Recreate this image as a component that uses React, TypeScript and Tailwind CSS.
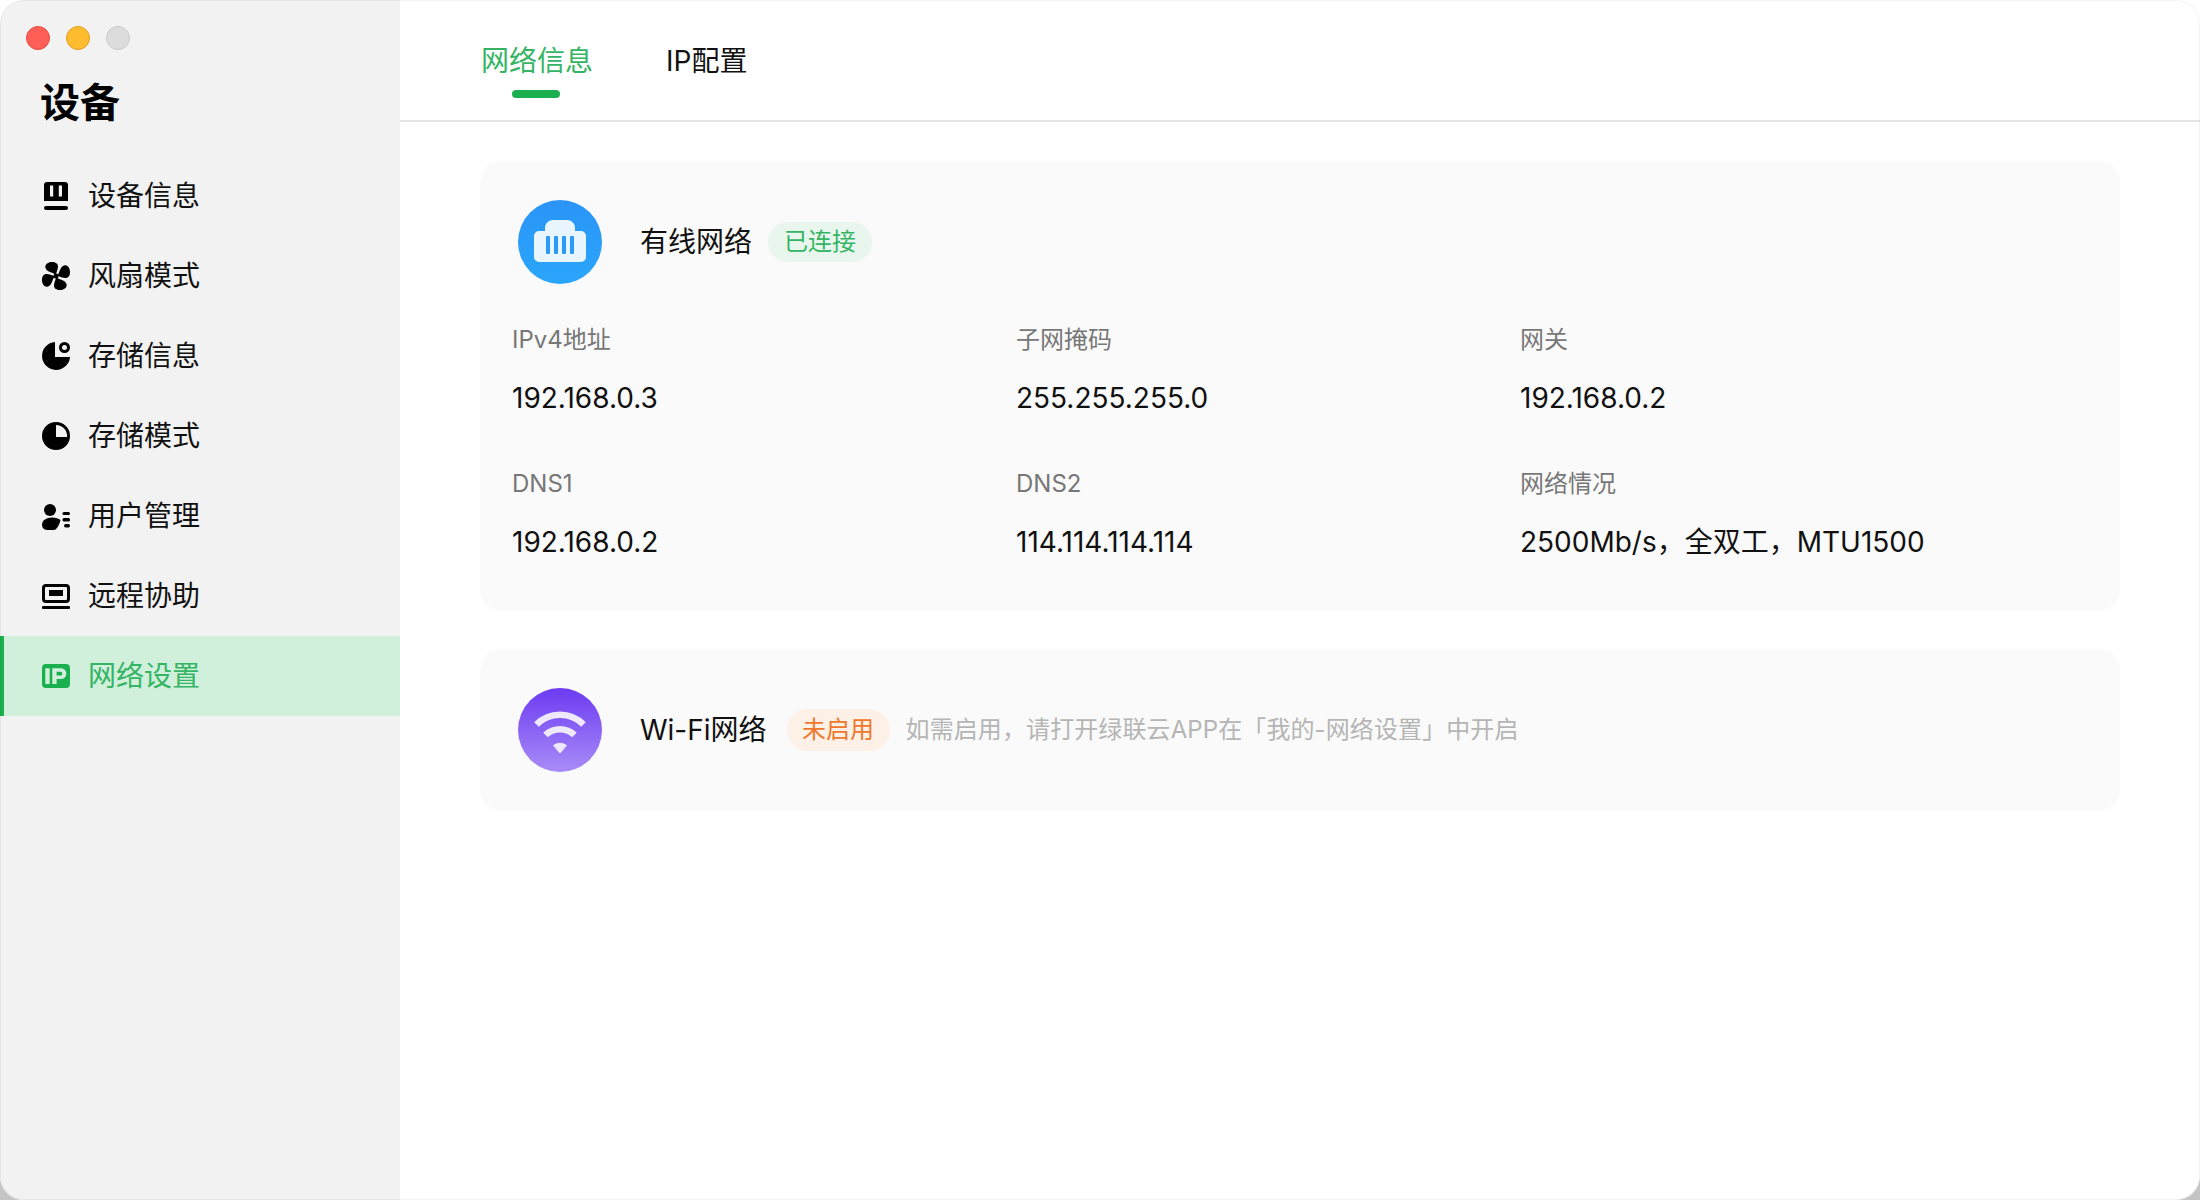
import type { ReactNode } from "react";

const FONT = "font-['Inter','Noto_Sans_CJK_SC','Noto_Sans',sans-serif]";

function DeviceIcon() {
  return (
    <svg viewBox="0 0 28 28" className="h-7 w-7" fill="currentColor">
      <path fillRule="evenodd" d="M5 0h18a3 3 0 0 1 3 3v16H2V3a3 3 0 0 1 3-3Zm3 3.500v11h3.200v-11H8Zm8.800 0v11H20v-11h-3.200Z" />
      <rect x="2" y="24" width="24" height="4" rx="2" />
    </svg>
  );
}

function FanIcon() {
  const blade = "M14 13C12 10.500 5 10.500 3.500 6 2.500 2.500 6 0 10 0c3.500 0 6 1.500 6 4.500 0 3-1.500 5-2 8.500Z";
  return (
    <svg viewBox="0 0 28 28" className="h-7 w-7" fill="currentColor">
      <path d={blade} />
      <path d={blade} transform="rotate(90 14 14)" />
      <path d={blade} transform="rotate(180 14 14)" />
      <path d={blade} transform="rotate(270 14 14)" />
      <circle cx="14" cy="14" r="2.500" />
    </svg>
  );
}

function StorageInfoIcon() {
  return (
    <svg viewBox="0 0 28 28" className="h-7 w-7" fill="currentColor">
      <path d="M13 0V15H28A14 14 0 1 1 13 0Z" />
      <path fillRule="evenodd" d="M22.500 0a5.500 5.500 0 1 1 0 11 5.500 5.500 0 0 1 0-11Zm0 3a2.500 2.500 0 1 0 0 5 2.500 2.500 0 0 0 0-5Z" />
    </svg>
  );
}

function StorageModeIcon() {
  return (
    <svg viewBox="0 0 28 28" className="h-7 w-7" fill="currentColor">
      <path fillRule="evenodd" d="M14 0a14 14 0 1 1 0 28 14 14 0 0 1 0-28Zm0 3v12h11a11 11 0 0 0-11-12Z" />
    </svg>
  );
}

function UserIcon() {
  return (
    <svg viewBox="0 0 28 28" className="h-7 w-7" fill="currentColor">
      <circle cx="8" cy="8" r="6" />
      <path d="M0 22.800C0 18.500 4.500 15.500 10 15.500c3.500 0 6.500 1 8.500 2.500-1 4-2.500 7.500-5 9.500-1 .5-2.500.5-3.500.5H5c-3 0-5-2.200-5-5.200Z" />
      <rect x="20.500" y="10" width="7.500" height="3" rx="1.500" />
      <rect x="20.500" y="16" width="7.500" height="3.500" rx="1.500" />
      <rect x="22" y="22" width="6" height="3.500" rx="1.700" />
    </svg>
  );
}

function RemoteIcon() {
  return (
    <svg viewBox="0 0 28 28" className="h-7 w-7" fill="currentColor">
      <path fillRule="evenodd" d="M4 2h20a4 4 0 0 1 4 4v11a4 4 0 0 1-4 4H4a4 4 0 0 1-4-4V6a4 4 0 0 1 4-4Zm0 3a1 1 0 0 0-1 1v11a1 1 0 0 0 1 1h20a1 1 0 0 0 1-1V6a1 1 0 0 0-1-1H4Zm3 3h14v6H7V8Z" />
      <rect x="0" y="24" width="28" height="3" rx="1" />
    </svg>
  );
}

function IpIcon() {
  return (
    <svg viewBox="0 0 28 24" className="h-6 w-7" fill="currentColor">
      <path fillRule="evenodd" d="M4 0h20a4 4 0 0 1 4 4v16a4 4 0 0 1-4 4H4a4 4 0 0 1-4-4V4a4 4 0 0 1 4-4Zm-.700 4.300V20h4.400V4.300H3.300Zm7 0V20h4.300v-5H19a5.350 5.350 0 0 0 0-10.700h-8.700Zm4.300 3.500H18.500a1.850 1.850 0 0 1 0 3.700h-3.900V7.800Z" />
    </svg>
  );
}

function LanIcon() {
  return (
    <svg viewBox="0 0 84 84" className="h-[84px] w-[84px]">
      <defs>
        <linearGradient id="lan" x1="0" y1="0" x2="0" y2="1">
          <stop offset="0" stopColor="#2a94f7" />
          <stop offset="1" stopColor="#2aa6fb" />
        </linearGradient>
      </defs>
      <circle cx="42" cy="42" r="42" fill="url(#lan)" />
      <path
        d="M35 20h14a8 8 0 0 1 8 8v3h6a5 5 0 0 1 5 5v21a5 5 0 0 1-5 5H21a5 5 0 0 1-5-5V36a5 5 0 0 1 5-5h6v-3a8 8 0 0 1 8-8Z"
        fill="#e9f5fe"
      />
      <rect x="28" y="36" width="4" height="18" rx="1" fill="#2a9af8" />
      <rect x="36" y="36" width="4" height="18" rx="1" fill="#2a9af8" />
      <rect x="44" y="36" width="4" height="18" rx="1" fill="#2a9af8" />
      <rect x="52" y="36" width="4" height="18" rx="1" fill="#2a9af8" />
    </svg>
  );
}

function WifiIcon() {
  return (
    <svg viewBox="0 0 84 84" className="h-[84px] w-[84px]">
      <defs>
        <linearGradient id="wifi" x1="0" y1="0" x2="0" y2="1">
          <stop offset="0" stopColor="#6c3bf2" />
          <stop offset="1" stopColor="#a98cf8" />
        </linearGradient>
      </defs>
      <circle cx="42" cy="42" r="42" fill="url(#wifi)" />
      <g fill="none" stroke="#efe9fe" strokeWidth="6.500">
        <path d="M18.500 36.500a33 33 0 0 1 47 0" />
        <path d="M27.500 47a21 21 0 0 1 29 0" />
      </g>
      <path d="M35.500 57.500q6.500-4.500 13 0L42 65Z" fill="#efe9fe" stroke="#efe9fe" strokeWidth="1" strokeLinejoin="round" />
    </svg>
  );
}

const menu: { label: string; icon: ReactNode; active?: boolean }[] = [
  { label: "设备信息", icon: <DeviceIcon /> },
  { label: "风扇模式", icon: <FanIcon /> },
  { label: "存储信息", icon: <StorageInfoIcon /> },
  { label: "存储模式", icon: <StorageModeIcon /> },
  { label: "用户管理", icon: <UserIcon /> },
  { label: "远程协助", icon: <RemoteIcon /> },
  { label: "网络设置", icon: <IpIcon />, active: true },
];

const fields = [
  { label: "IPv4地址", value: "192.168.0.3" },
  { label: "子网掩码", value: "255.255.255.0" },
  { label: "网关", value: "192.168.0.2" },
  { label: "DNS1", value: "192.168.0.2" },
  { label: "DNS2", value: "114.114.114.114" },
  { label: "网络情况", value: "2500Mb/s，全双工，MTU1500" },
];

export default function App() {
  return (
    <div className={`h-[1200px] w-[2200px] overflow-hidden bg-linear-to-b from-white via-[#e4e4e4] to-[#c4c4c4] ${FONT}`}>
      <div className="relative flex h-full overflow-hidden rounded-[24px] bg-white after:pointer-events-none after:absolute after:inset-0 after:rounded-[24px] after:border after:border-black/5">
        <aside className="flex w-[400px] shrink-0 flex-col bg-[#f2f2f2]">
          <div className="flex gap-4 pl-[26px] pt-[26px]">
            <span className="h-6 w-6 rounded-full border border-[#e5483f] bg-[#ff5f57]" />
            <span className="h-6 w-6 rounded-full border border-[#dfa023] bg-[#febc2e]" />
            <span className="h-6 w-6 rounded-full border border-[#cacaca] bg-[#dcdcdc]" />
          </div>
          <h1 className="ml-10 mt-[23px] text-[40px] font-bold leading-[60px] text-black">设备</h1>
          <nav className="mt-[23px] flex flex-col">
            {menu.map((item) => (
              <div
                key={item.label}
                className={`flex h-20 items-center gap-[18px] border-l-4 pl-[38px] text-[28px] ${
                  item.active
                    ? "border-[#1bb04f] bg-[#d0f0dc] text-[#35b564]"
                    : "border-transparent text-[#111111]"
                }`}
              >
                <span className={item.active ? "text-[#1bb04f]" : "text-black"}>{item.icon}</span>
                <span className="leading-10">{item.label}</span>
              </div>
            ))}
          </nav>
        </aside>

        <main className="flex min-w-0 flex-1 flex-col">
          <div className="flex h-[122px] gap-[73px] border-b-2 border-[#e4e4e4] pl-[81px]">
            <div className="relative pt-[41px] text-[28px] leading-10 text-[#35b564]">
              网络信息
              <span className="absolute left-[31px] top-[90px] h-2 w-12 rounded-full bg-[#1bb04f]" />
            </div>
            <div className="pt-[41px] text-[28px] leading-10 text-[#111111]">IP配置</div>
          </div>

          <div className="flex flex-col gap-10 pl-[80px] pr-[80px] pt-10">
            <section className="h-[448px] rounded-[20px] bg-[#fafafa] pl-[32px] pt-[38px]">
              <div className="flex items-center">
                <span className="ml-[6px]"><LanIcon /></span>
                <span className="ml-[38px] text-[28px] leading-10 text-[#111111]">有线网络</span>
                <span className="ml-[16px] flex h-10 w-[104px] items-center justify-center rounded-full bg-[#e8f6ed] text-2xl text-[#35b564]">
                  已连接
                </span>
              </div>
              <div className="mt-[38px] grid grid-cols-[504px_504px_1fr] gap-y-12">
                {fields.map((f) => (
                  <div key={f.label}>
                    <div className="text-2xl leading-9 text-[#777777]">{f.label}</div>
                    <div className="mt-5 text-[28px] leading-10 text-[#111111]">{f.value}</div>
                  </div>
                ))}
              </div>
            </section>

            <section className="flex h-[160px] items-center rounded-[20px] bg-[#fafafa] pl-[38px]">
              <WifiIcon />
              <span className="ml-[38px] text-[28px] leading-10 text-[#111111]">Wi-Fi网络</span>
              <span className="ml-5 flex h-[42px] w-[103px] items-center justify-center rounded-full bg-[#fdf1e7] text-2xl text-[#f0772b]">
                未启用
              </span>
              <span className="ml-4 text-2xl leading-9 tracking-[0.1px] text-[#b5b5b5]">
                如需启用，请打开绿联云APP在「我的-网络设置」中开启
              </span>
            </section>
          </div>
        </main>
      </div>
    </div>
  );
}
